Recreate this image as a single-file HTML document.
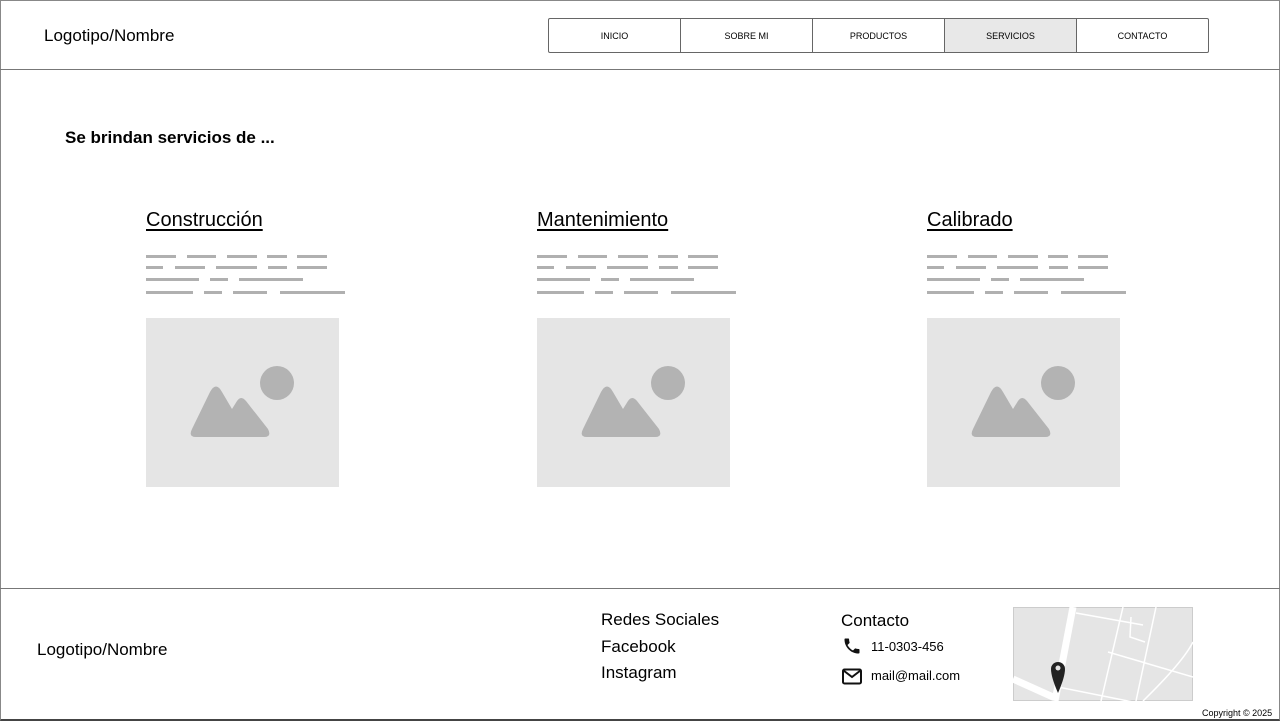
<!DOCTYPE html>
<html><head><meta charset="utf-8"><style>
*{margin:0;padding:0;box-sizing:border-box}
body{width:1280px;height:721px;position:relative;background:#fff;font-family:"Liberation Sans",Arial,sans-serif;color:#000;overflow:hidden}
.a{position:absolute}
.frame{left:0;top:0;width:1280px;height:721px;border:1px solid #888;border-bottom:2px solid #444}
.hl{left:0;width:1280px;height:1px;background:#777}
.nav{left:548px;top:18px;width:661px;height:35px;border:1px solid #666;display:flex;border-radius:2px}
.nav div{flex:1;border-right:1px solid #666;font-size:9px;display:flex;align-items:center;justify-content:center}
.nav div:last-child{border-right:none}
.card h2{font-weight:normal;font-size:20px;text-decoration:underline;text-underline-offset:3px}
.ln{position:absolute;height:3px;background:#b0b0b0}
.ph{background:#e5e5e5;width:193px;height:169px}
.f{font-size:17px}
</style></head><body>
<div class="a frame"></div>
<div class="a f" style="left:44px;top:26px">Logotipo/Nombre</div>
<div class="a nav"><div>INICIO</div><div>SOBRE MI</div><div>PRODUCTOS</div><div style="background:#e8e8e8">SERVICIOS</div><div>CONTACTO</div></div>
<div class="a hl" style="top:69px"></div>
<div class="a" style="left:65px;top:128px;font-size:17px;font-weight:bold">Se brindan servicios de ...</div>

<div id="cards"></div>
<script>
const xs=[146,537,927],names=["Construcción","Mantenimiento","Calibrado"];
const rows=[[256,[[0,30],[41,70],[81,111],[121,141],[151,181]]],[267,[[0,17],[29,59],[70,111],[122,141],[151,181]]],[279,[[0,53],[64,82],[93,157]]],[292,[[0,47],[58,76],[87,121],[134,199]]]];
let h="";
xs.forEach((x,i)=>{
h+=`<div class="a card" style="left:${x}px;top:209px"><h2>${names[i]}</h2></div>`;
rows.forEach(r=>r[1].forEach(s=>{h+=`<div class="ln" style="left:${x+s[0]}px;top:${r[0]-1}px;width:${s[1]-s[0]}px"></div>`}));
h+=`<div class="a ph" style="left:${x}px;top:318px"><svg width="193" height="169"><circle cx="131" cy="65" r="17" fill="#b3b3b3"/><path d="M50 119 Q42 119 46 111 L64 74 Q70 63 76 74 L86 91 L91 83 Q95 77 100 83 L122 111 Q126 119 118 119 Z" fill="#b3b3b3"/></svg></div>`;
});
document.getElementById("cards").innerHTML=h;
</script>

<div class="a hl" style="top:588px"></div>
<div class="a f" style="left:37px;top:640px">Logotipo/Nombre</div>
<div class="a f" style="left:601px;top:607px;line-height:26.5px">Redes Sociales<br>Facebook<br>Instagram</div>
<div class="a f" style="left:841px;top:611px">Contacto</div>
<svg class="a" style="left:842px;top:636px" width="20" height="20" viewBox="0 0 24 24"><path d="M6.6 10.8c1.4 2.8 3.8 5.1 6.6 6.6l2.2-2.2c.3-.3.7-.4 1-.2 1.1.4 2.3.6 3.6.6.6 0 1 .4 1 1V20c0 .6-.4 1-1 1C10.6 21 3 13.4 3 4c0-.6.4-1 1-1h3.5c.6 0 1 .4 1 1 0 1.3.2 2.5.6 3.6.1.3 0 .7-.2 1L6.6 10.8z" fill="#111"/></svg>
<div class="a" style="left:871px;top:639px;font-size:13px">11-0303-456</div>
<svg class="a" style="left:842px;top:668px" width="20" height="17" viewBox="0 0 20 17"><rect x="1" y="1.5" width="18" height="14" rx="1.5" fill="none" stroke="#111" stroke-width="2"/><path d="M1.5 2.5 L10 9 L18.5 2.5" fill="none" stroke="#111" stroke-width="2"/></svg>
<div class="a" style="left:871px;top:668px;font-size:13px">mail@mail.com</div>
<svg class="a" style="left:1013px;top:607px" width="180" height="94" viewBox="0 0 180 94">
<rect x="0.5" y="0.5" width="179" height="93" fill="#e5e5e5" stroke="#ccc"/>
<g stroke="#fff" fill="none">
<path d="M60 0 L42 94" stroke-width="7"/>
<path d="M0 72 L40 90" stroke-width="7"/>
<path d="M63 6 L130 18 M110 0 L88 94 M143 0 L123 94 M95 45 L180 70 M45 80 L120 95 M118 10 L117 30 L132 35 M180 35 Q170 55 130 94" stroke-width="1.5"/>
</g>
<path d="M45 86 Q38 70 38 62 A7 7 0 0 1 52 62 Q52 70 45 86Z" fill="#222"/><circle cx="45" cy="61" r="2.5" fill="#e5e5e5"/>
</svg>
<div class="a" style="left:1202px;top:708px;font-size:9px">Copyright © 2025</div>
</body></html>
